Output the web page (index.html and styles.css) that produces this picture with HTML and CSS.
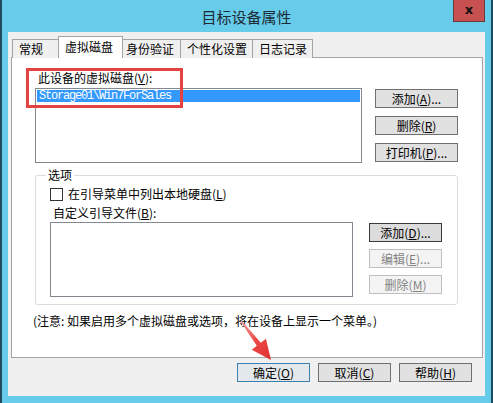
FILE: index.html
```html
<!DOCTYPE html>
<html lang="zh-CN">
<head>
    <meta charset="UTF-8">
    <title>目标设备属性</title>
    <link rel="stylesheet" href="styles.css">
</head>
<body>
    <div class="window">
        <div class="titlebar">
            <div class="title">目标设备属性</div>
            <div class="close">x</div>
        </div>

        <div class="client">
            <div class="tabs">
                <div class="tab">常规</div>
                <div class="tab active">虚拟磁盘</div>
                <div class="tab">身份验证</div>
                <div class="tab">个性化设置</div>
                <div class="tab">日志记录</div>
            </div>

            <div class="panel">
                <div class="label">此设备的虚拟磁盘(<u>V</u>):</div>
                <div class="row">
                    <div class="listbox">
                        <div class="item selected">Storage01\Win7ForSales</div>
                    </div>
                    <div class="btn-col">
                        <div class="btn">添加(<u>A</u>)...</div>
                        <div class="btn">删除(<u>R</u>)</div>
                        <div class="btn">打印机(<u>P</u>)...</div>
                    </div>
                </div>

                <fieldset class="group">
                    <legend>选项</legend>
                    <div class="group-body">
                        <div class="check-row">
                            <span class="checkbox"></span>
                            <span>在引导菜单中列出本地硬盘(<u>L</u>)</span>
                        </div>
                        <div class="label">自定义引导文件(<u>B</u>):</div>
                        <div class="row">
                            <div class="listbox small"></div>
                            <div class="btn-col tight">
                                <div class="btn narrow focused">添加(<u>D</u>)...</div>
                                <div class="btn narrow disabled">编辑(<u>E</u>)...</div>
                                <div class="btn narrow disabled">删除(<u>M</u>)</div>
                            </div>
                        </div>
                    </div>
                </fieldset>

                <div class="note">(注意: 如果启用多个虚拟磁盘或选项，将在设备上显示一个菜单。)</div>
            </div>

            <div class="footer">
                <div class="btn narrow default">确定(<u>O</u>)</div>
                <div class="btn narrow">取消(<u>C</u>)</div>
                <div class="btn narrow">帮助(<u>H</u>)</div>
            </div>
        </div>

        <!-- annotation overlays -->
        <div class="mark"></div>
        <svg class="arrow" width="40" height="48" viewBox="0 0 40 48">
            <defs>
                <linearGradient id="ag" x1="0" y1="0" x2="1" y2="1">
                    <stop offset="0" stop-color="#f2a3a3"/>
                    <stop offset="0.5" stop-color="#ea4a47"/>
                    <stop offset="1" stop-color="#e3302e"/>
                </linearGradient>
            </defs>
            <polygon points="5.5,4.6 24.8,26.7 29.9,22.7 35,44 15.7,33.7 20.8,29.7 4.5,5.4" fill="url(#ag)"/>
        </svg>
    </div>
</body>
</html>
```

FILE: styles.css
```css
body {
    margin: 0;
    font-family: "Noto Sans CJK SC", "Liberation Sans", sans-serif;
    font-size: 12px;
    color: #000;
}

u {
    text-decoration: underline;
    text-underline-offset: 1px;
}

.window {
    position: relative;
    width: 493px;
    height: 403px;
    box-sizing: border-box;
    background-color: #67cbea;
    border-left: 2px solid #1f4a60;
    border-right: 2px solid #1f4a60;
}

.titlebar {
    display: grid;
    grid-template-columns: 1fr auto 1fr;
    height: 32px;
}

.title {
    grid-column: 2;
    align-self: center;
    font-size: 15px;
    line-height: 20px;
    color: #1c2b36;
    padding-top: 1px;
}

.close {
    grid-column: 3;
    justify-self: end;
    width: 32px;
    height: 22px;
    margin-right: 6px;
    box-sizing: border-box;
    background-color: #c75050;
    border: 1px solid #6b3b3b;
    border-top: none;
    font-family: "DejaVu Sans", sans-serif;
    font-weight: bold;
    font-size: 13px;
    line-height: 19px;
    text-align: center;
    color: #111;
}

.client {
    margin: 0 6px;
    height: 364px;
    background-color: #f0f0f0;
    padding-top: 4px;
    box-sizing: border-box;
}

.tabs {
    display: flex;
    align-items: flex-end;
    height: 22px;
    padding-left: 4px;
    margin-bottom: -1px;
}

.tab {
    height: 19px;
    box-sizing: border-box;
    padding-left: 6px;
    border: 1px solid #a3a3a3;
    border-bottom: none;
    margin-left: -1px;
    background-color: #f0f0f0;
    line-height: 18px;
}

.tab:nth-child(1) { width: 47px; margin-left: 0; }
.tab:nth-child(2) { width: 65px; }
.tab:nth-child(3) { width: 59px; padding-left: 3px; }
.tab:nth-child(4) { width: 73px; }
.tab:nth-child(5) { width: 61px; }

.tab.active {
    position: relative;
    z-index: 1;
    height: 22px;
    background-color: #fff;
    line-height: 20px;
}

.panel {
    width: 472px;
    height: 301px;
    margin-left: 3px;
    box-sizing: border-box;
    background-color: #fff;
    border: 1px solid #a3a3a3;
    padding: 13px 0 0 23px;
}

.label {
    line-height: 14px;
    margin-left: 3px;
}

.row {
    display: flex;
    align-items: flex-start;
    margin-top: 3px;
}

.listbox {
    width: 327px;
    height: 75px;
    box-sizing: border-box;
    border: 1px solid #828790;
    background-color: #fff;
    padding: 1px;
}

.listbox.small {
    width: 303px;
}

.item {
    height: 12px;
    line-height: 12px;
    padding-left: 2px;
    font-family: "Liberation Mono", monospace;
    font-size: 12px;
    letter-spacing: -1.2px;
}

.item.selected {
    background-color: #3399ff;
    color: #fff;
}

.btn-col {
    display: flex;
    flex-direction: column;
    gap: 8px;
    margin-left: 13px;
    padding-top: 1px;
}

.btn-col.tight {
    gap: 7px;
    margin-left: 16px;
}

.btn {
    width: 83px;
    height: 19px;
    box-sizing: border-box;
    border: 1px solid #707070;
    background-color: #e1e1e1;
    text-align: center;
    line-height: 17px;
}

.btn.narrow {
    width: 73px;
}

.btn.focused {
    border-color: #3a3a3a;
    background-color: #dcdcdc;
}

.btn.disabled {
    border-color: #bfbfbf;
    background-color: #f4f4f4;
    color: #838383;
}

.btn.default {
    border-color: #3c7fb1;
    background-color: #e3e8ed;
}

.group {
    width: 423px;
    margin: 5px 0 0 0;
    padding: 0;
    box-sizing: border-box;
    border: 1px solid #dcdcdc;
    border-radius: 3px;
}

.group legend {
    margin-left: 10px;
    padding: 0 2px;
    line-height: 14px;
}

.group-body {
    padding: 5px 0 7px 14px;
}

.group-body .label {
    margin-top: 5px;
}

.group-body .row {
    margin-top: 2px;
}

.check-row {
    display: flex;
    align-items: center;
    gap: 5px;
    line-height: 14px;
}

.checkbox {
    width: 13px;
    height: 13px;
    box-sizing: border-box;
    border: 1px solid #333;
    background-color: #fff;
}

.note {
    margin: 9px 0 0 -2px;
    line-height: 14px;
}

.footer {
    display: flex;
    justify-content: flex-end;
    gap: 8px;
    padding: 5px 13px 0 0;
}

.mark {
    position: absolute;
    left: 24px;
    top: 68px;
    width: 157px;
    height: 40px;
    box-sizing: border-box;
    border: 3px solid #e64340;
}

.arrow {
    position: absolute;
    left: 234px;
    top: 316px;
}
```
